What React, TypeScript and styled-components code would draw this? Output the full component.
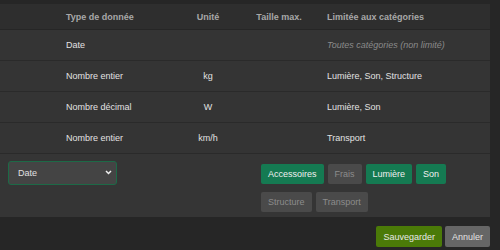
import React from "react";
import styled, { createGlobalStyle } from "styled-components";

const Global = createGlobalStyle`
  html, body { margin: 0; padding: 0; background: #262626; }
  body { font-family: "Liberation Sans", Arial, sans-serif; font-size: 9px; color: #e0e0e0; }
  * { box-sizing: border-box; }
`;

const Page = styled.div`
  width: 500px;
  height: 250px;
  padding-top: 4px;
  background: #262626;
  overflow: hidden;
`;

const Panel = styled.div`
  width: 490px;
  background: #343434;
`;

const cols = "54px 119px 70px 72px 1fr";

const HeadRow = styled.div`
  display: grid;
  grid-template-columns: ${cols};
  height: 26px;
  background: #2e2e2e;
  border-bottom: 1px solid #262626;
  align-items: center;
`;

const Row = styled.div`
  display: grid;
  grid-template-columns: ${cols};
  height: 31px;
  border-bottom: 1px solid #2a2a2a;
  align-items: center;
`;

const HeadCell = styled.div<{ $center?: boolean }>`
  padding: 0 12px;
  font-weight: bold;
  color: #a8a8a8;
  text-align: ${(p) => (p.$center ? "center" : "left")};
  white-space: nowrap;
`;

const Cell = styled.div<{ $center?: boolean; $muted?: boolean }>`
  padding: 0 12px;
  color: ${(p) => (p.$muted ? "#8a8a8a" : "#e2e2e2")};
  font-style: ${(p) => (p.$muted ? "italic" : "normal")};
  text-align: ${(p) => (p.$center ? "center" : "left")};
  white-space: nowrap;
`;

const Editor = styled.div`
  display: grid;
  grid-template-columns: 253px 1fr;
  height: 63px;
  padding: 7px 0 0 8px;
  background: #353535;
`;

const SelectWrap = styled.div`
  position: relative;
  width: 109px;
  height: 24px;
`;

const Select = styled.select`
  appearance: none;
  width: 109px;
  height: 24px;
  background: #444444;
  border: 1px solid #1d6a47;
  border-radius: 3px;
  color: #e0e0e0;
  font-family: "Liberation Sans", Arial, sans-serif;
  font-size: 9px;
  padding: 0 0 0 9px;
  outline: none;
`;

const Chevron = styled.svg`
  position: absolute;
  right: 5px;
  top: 9px;
  pointer-events: none;
`;

const Chips = styled.div`
  display: flex;
  flex-wrap: wrap;
  gap: 3px 4px;
  width: 194px;
  padding-top: 3px;
`;

const Chip = styled.button<{ $active?: boolean }>`
  height: 20px;
  padding: 0 7px;
  border: none;
  border-radius: 2px;
  background: ${(p) => (p.$active ? "#157a52" : "#4a4a4a")};
  color: ${(p) => (p.$active ? "#f0f0f0" : "#8c8c8c")};
  font-family: "Liberation Sans", Arial, sans-serif;
  font-size: 9px;
  cursor: pointer;
`;

const Footer = styled.div`
  width: 490px;
  display: flex;
  justify-content: flex-end;
  gap: 3px;
  padding-top: 9px;
`;

const Button = styled.button<{ $primary?: boolean }>`
  height: 21px;
  padding: 0 7px;
  border: none;
  border-radius: 2px;
  background: ${(p) => (p.$primary ? "#4b7a08" : "#666666")};
  color: ${(p) => (p.$primary ? "#e8e8e8" : "#e4e4e4")};
  font-family: "Liberation Sans", Arial, sans-serif;
  font-size: 9px;
  cursor: pointer;
`;

const rows = [
  { type: "Date", unit: "", max: "", cats: "" },
  { type: "Nombre entier", unit: "kg", max: "", cats: "Lumière, Son, Structure" },
  { type: "Nombre décimal", unit: "W", max: "", cats: "Lumière, Son" },
  { type: "Nombre entier", unit: "km/h", max: "", cats: "Transport" },
];

const chips = [
  { label: "Accessoires", active: true },
  { label: "Frais", active: false },
  { label: "Lumière", active: true },
  { label: "Son", active: true },
  { label: "Structure", active: false },
  { label: "Transport", active: false },
];

export default function App() {
  return (
    <Page>
      <Global />
      <Panel>
        <HeadRow>
          <HeadCell />
          <HeadCell>Type de donnée</HeadCell>
          <HeadCell $center>Unité</HeadCell>
          <HeadCell $center>Taille max.</HeadCell>
          <HeadCell>Limitée aux catégories</HeadCell>
        </HeadRow>
        {rows.map((r, i) => (
          <Row key={i}>
            <Cell />
            <Cell>{r.type}</Cell>
            <Cell $center>{r.unit}</Cell>
            <Cell $center>{r.max}</Cell>
            {r.cats ? (
              <Cell>{r.cats}</Cell>
            ) : (
              <Cell $muted>Toutes catégories (non limité)</Cell>
            )}
          </Row>
        ))}
        <Editor>
          <div>
            <SelectWrap>
              <Select defaultValue="Date">
                <option>Date</option>
                <option>Nombre entier</option>
                <option>Nombre décimal</option>
                <option>Texte</option>
              </Select>
              <Chevron width="7" height="5" viewBox="0 0 7 5">
                <path d="M1 1 L3.5 3.5 L6 1" fill="none" stroke="#f0f0f0" strokeWidth="1.5" />
              </Chevron>
            </SelectWrap>
          </div>
          <Chips>
            {chips.map((c) => (
              <Chip key={c.label} $active={c.active}>
                {c.label}
              </Chip>
            ))}
          </Chips>
        </Editor>
      </Panel>
      <Footer>
        <Button $primary>Sauvegarder</Button>
        <Button>Annuler</Button>
      </Footer>
    </Page>
  );
}
